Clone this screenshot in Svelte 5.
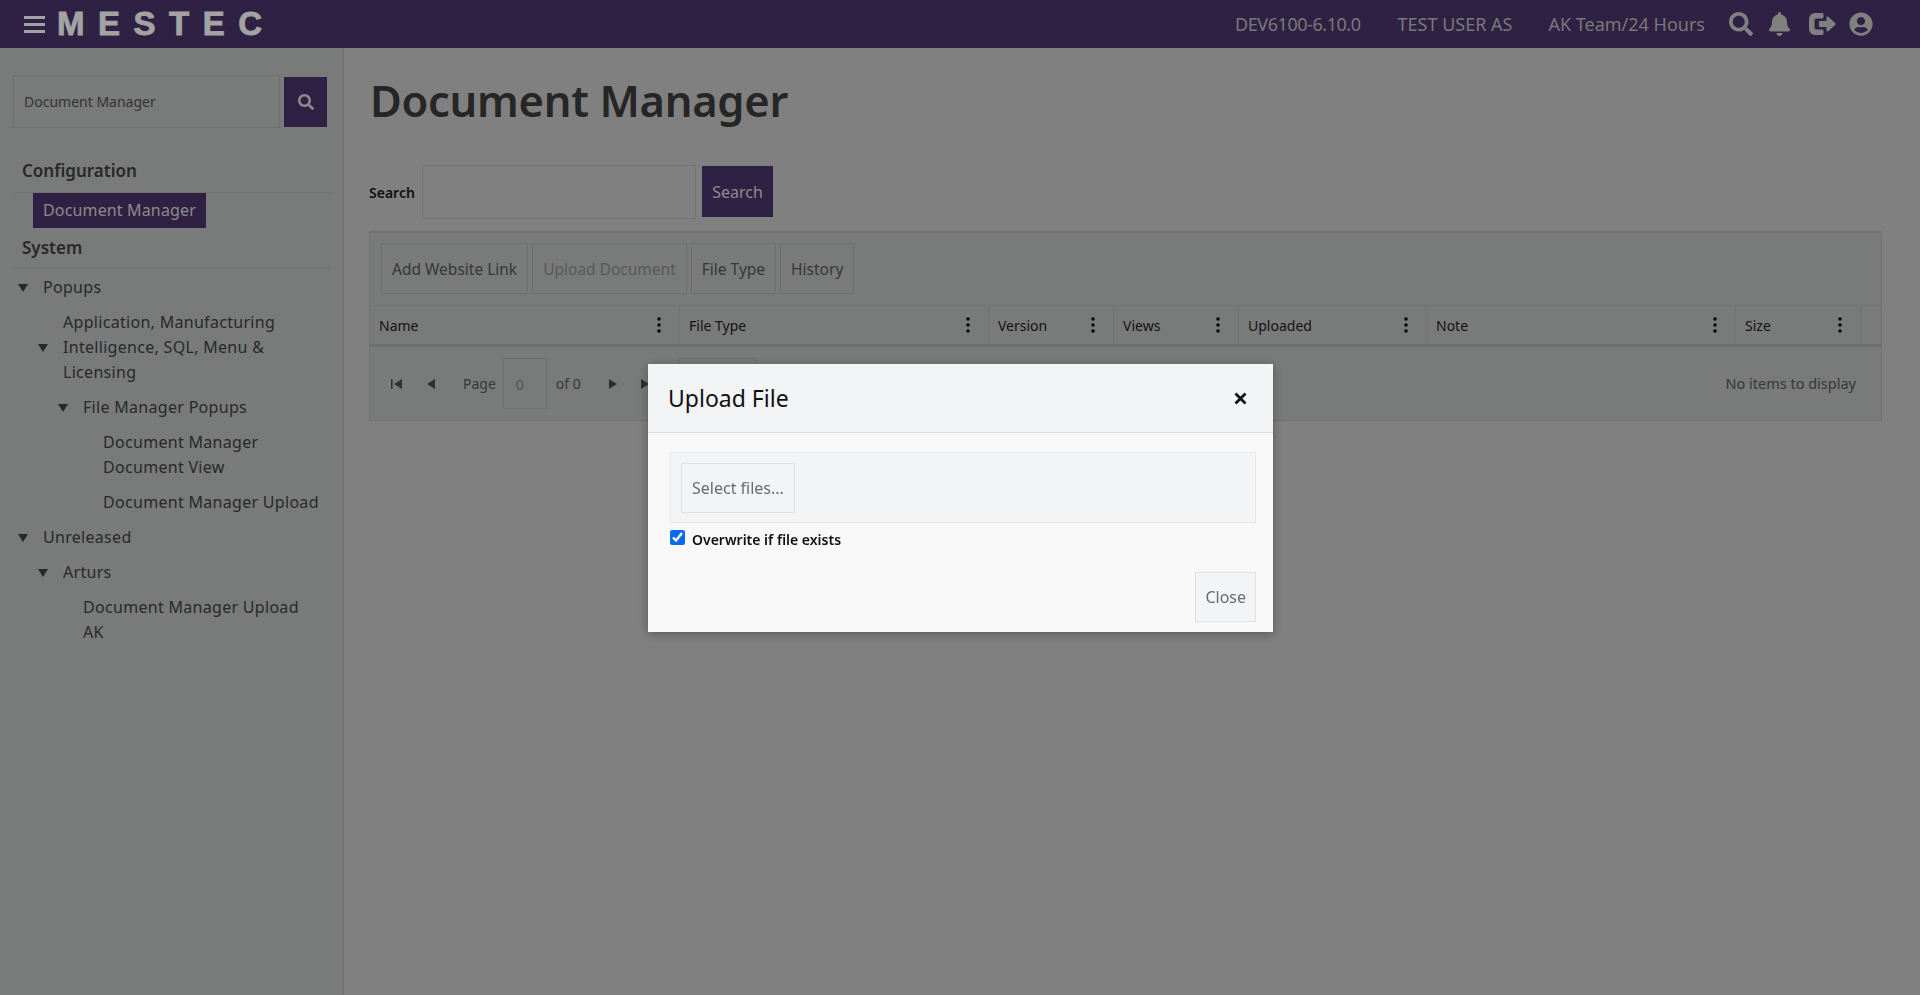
<script>
  const columns = ['Name', 'File Type', 'Version', 'Views', 'Uploaded', 'Note', 'Size'];
</script>

{#snippet arrow()}
  <svg class="arrow" viewBox="0 0 10 8"><path d="M0 0h10L5 8z" /></svg>
{/snippet}

<div class="page">
  <header class="topbar">
    <div class="brand">
      <svg class="burger" viewBox="0 0 21 17"><path d="M0 0h21v3H0zM0 7h21v3H0zM0 14h21v3H0z" /></svg>
      <span class="logo">MESTEC</span>
    </div>
    <div class="topbar__info">
      <span class="dev">DEV6100-6.10.0</span>
      <span class="user">TEST USER AS</span>
      <span class="team">AK Team/24 Hours</span>
      <div class="topbar__icons">
        <svg width="24" height="24" viewBox="0 0 512 512"><path d="M505 442.700L405.300 343c-4.500-4.500-10.600-7-17-7H372c27.600-35.300 44-79.700 44-128C416 93.100 322.900 0 208 0S0 93.100 0 208s93.100 208 208 208c48.300 0 92.700-16.400 128-44v16.300c0 6.400 2.500 12.500 7 17l99.700 99.700c9.400 9.400 24.600 9.400 33.900 0l28.300-28.300c9.400-9.400 9.400-24.600.1-34zM208 336c-70.700 0-128-57.200-128-128 0-70.700 57.200-128 128-128 70.700 0 128 57.200 128 128 0 70.700-57.200 128-128 128z" /></svg>
        <svg width="21" height="24" viewBox="0 0 448 512"><path d="M224 512c35.320 0 63.970-28.650 63.970-64H160.030c0 35.350 28.650 64 63.970 64zm215.390-149.710c-19.320-20.760-55.470-51.990-55.470-154.290 0-77.700-54.480-139.900-127.940-155.160V32c0-17.670-14.320-32-31.980-32s-31.980 14.330-31.980 32v20.840C118.560 68.100 64.080 130.300 64.080 208c0 102.300-36.150 133.530-55.470 154.290-6 6.450-8.660 14.160-8.610 21.710.11 16.400 12.980 32 32.100 32h383.800c19.120 0 32-15.600 32.100-32 .05-7.550-2.610-15.270-8.610-21.710z" /></svg>
        <svg class="exit" width="27" height="24" viewBox="0 0 27 24"><path d="M6 1h7a1.500 1.500 0 0 1 1.500 1.500V5a1.500 1.500 0 0 1-1.500 1.500H7.500a2 2 0 0 0-2 2v7a2 2 0 0 0 2 2H13a1.500 1.500 0 0 1 1.500 1.500v2.500A1.500 1.500 0 0 1 13 23H6a6 6 0 0 1-6-6V7a6 6 0 0 1 6-6z" /><path d="M17.500 5.500a1 1 0 0 1 1.700-.7l7.300 6.500a1 1 0 0 1 0 1.400l-7.300 6.500a1 1 0 0 1-1.700-.7V15h-6.500a1 1 0 0 1-1-1v-4a1 1 0 0 1 1-1h6.500z" /></svg>
        <svg width="24" height="24" viewBox="0 0 496 512"><path d="M248 8C111 8 0 119 0 256s111 248 248 248 248-111 248-248S385 8 248 8zm0 96c48.600 0 88 39.400 88 88s-39.400 88-88 88-88-39.400-88-88 39.400-88 88-88zm0 344c-58.700 0-111.300-26.600-146.500-68.200 18.800-35.400 55.600-59.800 98.500-59.800 2.400 0 4.800.4 7.100 1.100 13 4.200 26.600 6.900 40.900 6.900 14.300 0 28-2.700 40.900-6.900 2.300-.7 4.700-1.100 7.100-1.100 42.900 0 79.700 24.400 98.500 59.800C359.300 421.400 306.700 448 248 448z" /></svg>
      </div>
    </div>
  </header>

  <div class="content">
    <aside class="sidebar">
      <div class="side-search">
        <input class="side-search__input" value="Document Manager" />
        <button class="side-search__btn" aria-label="Search">
          <svg width="16" height="16" viewBox="0 0 512 512"><path d="M505 442.700L405.300 343c-4.500-4.500-10.600-7-17-7H372c27.600-35.300 44-79.700 44-128C416 93.100 322.900 0 208 0S0 93.100 0 208s93.100 208 208 208c48.300 0 92.700-16.400 128-44v16.300c0 6.400 2.500 12.500 7 17l99.700 99.700c9.400 9.400 24.600 9.400 33.900 0l28.300-28.300c9.400-9.400 9.400-24.600.1-34zM208 336c-70.700 0-128-57.200-128-128 0-70.700 57.200-128 128-128 70.700 0 128 57.200 128 128 0 70.700-57.200 128-128 128z" /></svg>
        </button>
      </div>

      <h3 class="side-title">Configuration</h3>
      <a class="side-active" href="#top">Document Manager</a>
      <h3 class="side-title side-title--second">System</h3>

      <ul class="tree">
        <li class="tree__row">{@render arrow()}<span>Popups</span></li>
        <li class="tree__row tree__row--l1">{@render arrow()}<span>Application, Manufacturing Intelligence, SQL, Menu &amp; Licensing</span></li>
        <li class="tree__row tree__row--l2">{@render arrow()}<span>File Manager Popups</span></li>
        <li class="tree__row tree__row--l3"><span>Document Manager Document View</span></li>
        <li class="tree__row tree__row--l3"><span>Document Manager Upload</span></li>
        <li class="tree__row">{@render arrow()}<span>Unreleased</span></li>
        <li class="tree__row tree__row--l1">{@render arrow()}<span>Arturs</span></li>
        <li class="tree__row tree__row--leaf"><span>Document Manager Upload AK</span></li>
      </ul>
    </aside>

    <main class="main">
      <h1 class="title">Document Manager</h1>
      <div class="search">
        <label class="search__label" for="q">Search</label>
        <input id="q" class="search__input" />
        <button class="search__btn">Search</button>
      </div>

      <section class="grid">
        <div class="toolbar">
          <button class="tool">Add Website Link</button>
          <button class="tool tool--disabled">Upload Document</button>
          <button class="tool">File Type</button>
          <button class="tool">History</button>
        </div>
        <div class="grid__head">
          {#each columns as col}
            <div class="col">
              <span>{col}</span>
              <svg class="dots" width="4" height="16" viewBox="0 0 4 16"><circle cx="2" cy="2" r="1.800" /><circle cx="2" cy="8" r="1.800" /><circle cx="2" cy="14" r="1.800" /></svg>
            </div>
          {/each}
          <div class="col col--spare"></div>
        </div>
        <div class="pager">
          <svg class="pager__icon pager__first" viewBox="0 0 11 10"><path d="M0 0h1.500v10H0zM11 0v10L3 5z" /></svg>
          <svg class="pager__icon pager__prev" viewBox="0 0 8 10"><path d="M8 0v10L0 5z" /></svg>
          <span class="pager__page">Page</span>
          <span class="pager__input">0</span>
          <span>of 0</span>
          <svg class="pager__icon pager__next" viewBox="0 0 8 10"><path d="M0 0v10l8-5z" /></svg>
          <svg class="pager__icon pager__last" viewBox="0 0 11 10"><path d="M0 0v10l8-5zM9.500 0H11v10H9.500z" /></svg>
          <span class="pager__size"></span>
          <span class="pager__empty">No items to display</span>
        </div>
      </section>
    </main>
  </div>
</div>

<div class="backdrop"></div>

<div class="modal">
  <div class="modal__head">
    <span class="modal__title">Upload File</span>
    <svg class="modal__x" width="13" height="13" viewBox="0 0 13 13"><path d="M1.500 1.500l10 10M11.500 1.500l-10 10" /></svg>
  </div>
  <div class="modal__body">
    <div class="drop">
      <button class="btn">Select files...</button>
    </div>
    <label class="check">
      <input type="checkbox" checked />
      <span>Overwrite if file exists</span>
    </label>
    <div class="modal__foot">
      <button class="btn btn--close">Close</button>
    </div>
  </div>
</div>

<style>
  :global(body) {
    margin: 0;
    background: #c8c8c8;
    font-family: "Noto Sans", "Open Sans", sans-serif;
    color: #404242;
  }

  button,
  input {
    font: inherit;
    box-sizing: border-box;
    border-radius: 0;
  }

  .page {
    height: 995px;
    overflow: hidden;
  }

  .topbar {
    height: 48px;
    background: #4a3469;
    display: flex;
    align-items: center;
    justify-content: space-between;
  }

  .brand {
    display: flex;
    align-items: center;
    padding-left: 24px;
    gap: 12px;
  }

  .burger {
    width: 21px;
    height: 17px;
    fill: #fff;
  }

  .logo {
    font-family: "Liberation Sans", sans-serif;
    font-weight: 700;
    font-size: 33px;
    line-height: 40px;
    letter-spacing: 13.500px;
    color: #fff;
    -webkit-text-stroke: 0.8px #fff;
  }

  .topbar__info {
    display: flex;
    align-items: center;
    padding-right: 47px;
    font-size: 18px;
    color: #bcbcbc;
  }

  .dev {
    letter-spacing: -0.45px;
  }

  .user {
    margin-left: 37px;
  }

  .team {
    margin-left: 36px;
  }

  .topbar__icons {
    display: flex;
    align-items: center;
    gap: 16px;
    margin-left: 24px;
  }

  .topbar__icons svg {
    fill: #c8c8c8;
    display: block;
  }

  .topbar__icons .exit {
    margin: 0 -3px 0 3px;
  }

  .content {
    display: flex;
    height: 947px;
  }

  .sidebar {
    width: 344px;
    box-sizing: border-box;
    background: #bdc0bf;
    border-right: 1px solid #afb2b1;
    padding: 27px 13px 0;
    flex: none;
  }

  .side-search {
    display: flex;
    align-items: center;
    gap: 4px;
  }

  .side-search__input {
    width: 267px;
    height: 53px;
    padding: 0 10px;
    border: 1px solid #adb0af;
    background: #bdc0bf;
    font-size: 14px;
    color: #505252;
    outline: none;
  }

  .side-search__btn {
    width: 43px;
    height: 50px;
    border: 0;
    background: #4a3469;
    display: flex;
    align-items: center;
    justify-content: center;
    padding: 0;
  }

  .side-search__btn svg {
    fill: #d8d8d8;
  }

  .side-title {
    margin: 28px 0 0;
    width: 317px;
    box-sizing: border-box;
    padding-left: 9px;
    font-size: 17px;
    font-weight: 600;
    line-height: 30px;
    height: 37px;
    border-bottom: 1px solid #b0b3b2;
    color: #3f4141;
  }

  .side-title--second {
    margin-top: 5px;
    height: 36px;
  }

  .side-active {
    display: block;
    width: max-content;
    margin-left: 20px;
    padding: 0 10px;
    height: 35px;
    line-height: 35px;
    background: #4a3469;
    color: #d8d8d8;
    font-size: 16px;
    letter-spacing: 0.15px;
    text-decoration: none;
  }

  .tree {
    list-style: none;
    margin: 0;
    padding: 1px 0 0;
    font-size: 16px;
    letter-spacing: 0.3px;
    line-height: 25px;
    width: 317px;
  }

  .tree__row {
    display: flex;
    align-items: center;
    padding: 5px 8px 5px 5px;
  }

  .tree__row span {
    flex: 1;
  }

  .arrow {
    width: 10px;
    height: 8px;
    margin-right: 15px;
    fill: #3f4141;
    flex: none;
  }

  .tree__row--l1 {
    padding-left: 25px;
  }

  .tree__row--l2 {
    padding-left: 45px;
  }

  .tree__row--l3 {
    padding-left: 90px;
  }

  .tree__row--leaf {
    padding-left: 70px;
  }

  .main {
    flex: 1;
    padding: 0 38px 0 25px;
    min-width: 0;
  }

  .title {
    margin: 0;
    padding: 22px 0 0 1px;
    height: 73px;
    font-size: 43.5px;
    letter-spacing: -0.3px;
    line-height: 60px;
    font-weight: 600;
    color: #3c3c3c;
    box-sizing: content-box;
  }

  .search {
    display: flex;
    align-items: center;
    margin-top: 22px;
    height: 54px;
  }

  .search__label {
    font-size: 14px;
    font-weight: 600;
    color: #1a1a1a;
    width: 53px;
  }

  .search__input {
    width: 274px;
    height: 54px;
    border: 1px solid #b8b8b8;
    background: #c8c8c8;
    outline: none;
  }

  .search__btn {
    margin-left: 6px;
    width: 71px;
    height: 51px;
    border: 0;
    background: #4a3469;
    color: #d8d8d8;
    font-size: 16px;
    align-self: flex-start;
    margin-top: 1px;
  }

  .grid {
    margin-top: 12px;
    height: 190px;
    box-sizing: border-box;
    background: #bdc0bf;
    border: 1px solid #b0b3b2;
    border-top-width: 2px;
  }

  .toolbar {
    display: flex;
    gap: 4px;
    padding: 10px 11px 0;
    height: 72px;
    box-sizing: border-box;
  }

  .tool {
    height: 51px;
    padding: 0 10px;
    border: 1px solid #adb0af;
    background: #bdc0bf;
    color: #565858;
    font-size: 15.5px;
  }

  .tool--disabled {
    color: #8a8c8b;
  }

  .grid__head {
    display: grid;
    grid-template-columns: 310px 309px 125px 125px 188px 309px 125px 1fr;
    height: 38px;
    border-top: 1px solid #b3b6b5;
    border-bottom: 3px solid #adb0af;
    font-size: 14px;
    color: #1f2020;
  }

  .col {
    display: flex;
    align-items: center;
    justify-content: space-between;
    padding: 0 18px 0 9px;
    border-right: 1px solid #b3b6b5;
  }

  .col--spare {
    border-right: 0;
  }

  .dots {
    fill: #101010;
    flex: none;
  }

  .pager {
    display: flex;
    align-items: center;
    height: 73px;
    padding: 0 25px 0 21px;
    font-size: 14px;
    color: #565858;
  }

  .pager__icon {
    fill: #4a4c4c;
    height: 10px;
    flex: none;
  }

  .pager__first {
    width: 11px;
  }

  .pager__prev {
    width: 8px;
    margin-left: 25px;
  }

  .pager__page {
    margin-left: 28px;
  }

  .pager__input {
    width: 44px;
    height: 51px;
    box-sizing: border-box;
    margin: 0 9px 0 7px;
    padding-left: 12px;
    border: 1px solid #adb0af;
    line-height: 51px;
    color: #808282;
  }

  .pager__next {
    width: 8px;
    margin-left: 28px;
  }

  .pager__last {
    width: 11px;
    margin-left: 24px;
  }

  .pager__size {
    width: 78px;
    height: 51px;
    box-sizing: border-box;
    margin-left: 27px;
    border: 1px solid #adb0af;
  }

  .pager__empty {
    margin-left: auto;
    margin-bottom: 2px;
    font-size: 14.5px;
  }

  .backdrop {
    position: fixed;
    inset: 0;
    background: rgba(0, 0, 0, 0.36);
  }

  .modal {
    position: fixed;
    left: 648px;
    top: 364px;
    width: 625px;
    height: 268px;
    background: #f8f8f8;
    box-shadow: 0 2px 10px rgba(0, 0, 0, 0.3);
    color: #111;
  }

  .modal__head {
    height: 69px;
    box-sizing: border-box;
    background: #f3f4f6;
    border-bottom: 1px solid #dcdcdc;
    display: flex;
    align-items: center;
    justify-content: space-between;
    padding: 0 26px 0 20px;
  }

  .modal__title {
    font-size: 23px;
  }

  .modal__x {
    stroke: #111;
    stroke-width: 2.800;
    fill: none;
  }

  .modal__body {
    padding: 19px 17px 0 22px;
  }

  .drop {
    height: 71px;
    box-sizing: border-box;
    padding: 10px;
    background: #f3f4f6;
    border: 1px solid #e8e9eb;
  }

  .btn {
    height: 50px;
    padding: 0 10px;
    border: 1px solid #dfe0e2;
    background: #f3f4f6;
    color: #6b6b6b;
    font-size: 16px;
  }

  .check {
    display: flex;
    align-items: flex-start;
    gap: 7px;
    font-size: 14px;
    font-weight: 600;
    margin-top: 7px;
    height: 42px;
  }

  .check input {
    width: 15px;
    height: 15px;
    margin: 0;
    accent-color: #0b6bf0;
  }

  .modal__foot {
    display: flex;
    justify-content: flex-end;
  }

  .btn--close {
    padding: 0 9px;
  }
</style>
